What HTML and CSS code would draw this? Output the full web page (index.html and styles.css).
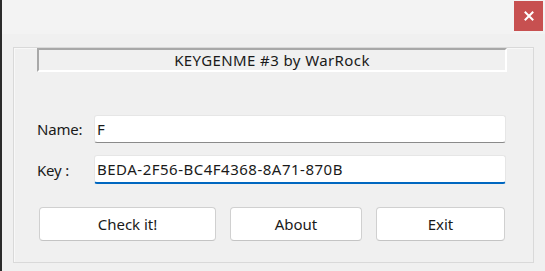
FILE: index.html
```html
<!DOCTYPE html>
<html lang="en">
<head>
    <meta charset="UTF-8">
    <title>KEYGENME #3 by WarRock</title>
    <link rel="stylesheet" href="styles.css">
</head>
<body>
    <div class="window">
        <div class="titlebar">
            <button class="close" title="Close">
                <svg width="10" height="10" viewBox="0 0 10 10">
                    <path d="M1.5 1.5 L8.5 8.5 M8.5 1.5 L1.5 8.5" stroke="#fff" stroke-width="2" stroke-linecap="square"/>
                </svg>
            </button>
        </div>

        <div class="client">
            <div class="group">
                <div class="banner">KEYGENME #3 by WarRock</div>

                <div class="fields">
                    <div class="row">
                        <label for="name">Name:</label>
                        <input type="text" id="name" class="field" value="F">
                    </div>
                    <div class="row">
                        <label for="key">Key :</label>
                        <input type="text" id="key" class="field focused" value="BEDA-2F56-BC4F4368-8A71-870B">
                    </div>
                </div>

                <div class="buttons">
                    <button class="btn btn-check">Check it!</button>
                    <button class="btn btn-about">About</button>
                    <button class="btn btn-exit">Exit</button>
                </div>
            </div>
        </div>
    </div>
</body>
</html>
```

FILE: styles.css
```css
* {
    box-sizing: border-box;
}

body {
    margin: 0;
    background-color: #f0f0f0;
    font-family: 'Noto Sans', 'Open Sans', sans-serif;
    font-size: 15px;
    color: #1a1a1a;
}

.window {
    width: 545px;
    height: 271px;
    border-left: 2px solid #2b2b2b;
    background-color: #f0f0f0;
}

.titlebar {
    height: 34px;
    background-color: #f3f3f3;
    display: flex;
    justify-content: flex-end;
    align-items: flex-start;
    padding: 1px 2px 0 0;
}

.close {
    width: 29px;
    height: 30px;
    border: none;
    background-color: #c75050;
    display: flex;
    align-items: center;
    justify-content: center;
    padding: 0;
}

.client {
    padding: 13px 0 0 11px;
}

.group {
    width: 521px;
    height: 216px;
    border: 1px solid #d9d9d9;
    box-shadow: inset 1px 1px 0 #f8f8f8;
    padding: 0 0 0 23px;
}

.banner {
    width: 470px;
    height: 24px;
    border-top: 2px solid #a8a8a8;
    border-left: 2px solid #a8a8a8;
    border-right: 2px solid #fff;
    border-bottom: 2px solid #fff;
    text-align: center;
    line-height: 20px;
    letter-spacing: 0.4px;
}

.fields {
    margin-top: 43px;
    display: flex;
    flex-direction: column;
    gap: 12px;
}

.row {
    display: flex;
    align-items: center;
}

.row label {
    width: 57px;
    letter-spacing: -0.2px;
}

.field {
    width: 412px;
    height: 28px;
    border: 1px solid #e6e6e6;
    border-bottom: 1px solid #8a8a8a;
    border-radius: 3px;
    background-color: #fff;
    font-family: inherit;
    font-size: 15px;
    color: #1a1a1a;
    padding: 0 2px;
    outline: none;
    letter-spacing: 0.5px;
}

.field.focused {
    height: 29px;
    border-bottom: 2px solid #0067c0;
}

.buttons {
    margin-top: 23px;
    margin-left: 2px;
    display: flex;
    gap: 14px;
}

.btn {
    height: 34px;
    background-color: #fff;
    border: 1px solid #d0d0d0;
    border-bottom-color: #c4c4c4;
    border-radius: 4px;
    font-family: inherit;
    font-size: 15px;
    color: #1a1a1a;
    padding: 0;
}

.btn-check {
    width: 177px;
}

.btn-about {
    width: 132px;
}

.btn-exit {
    width: 129px;
}
```
